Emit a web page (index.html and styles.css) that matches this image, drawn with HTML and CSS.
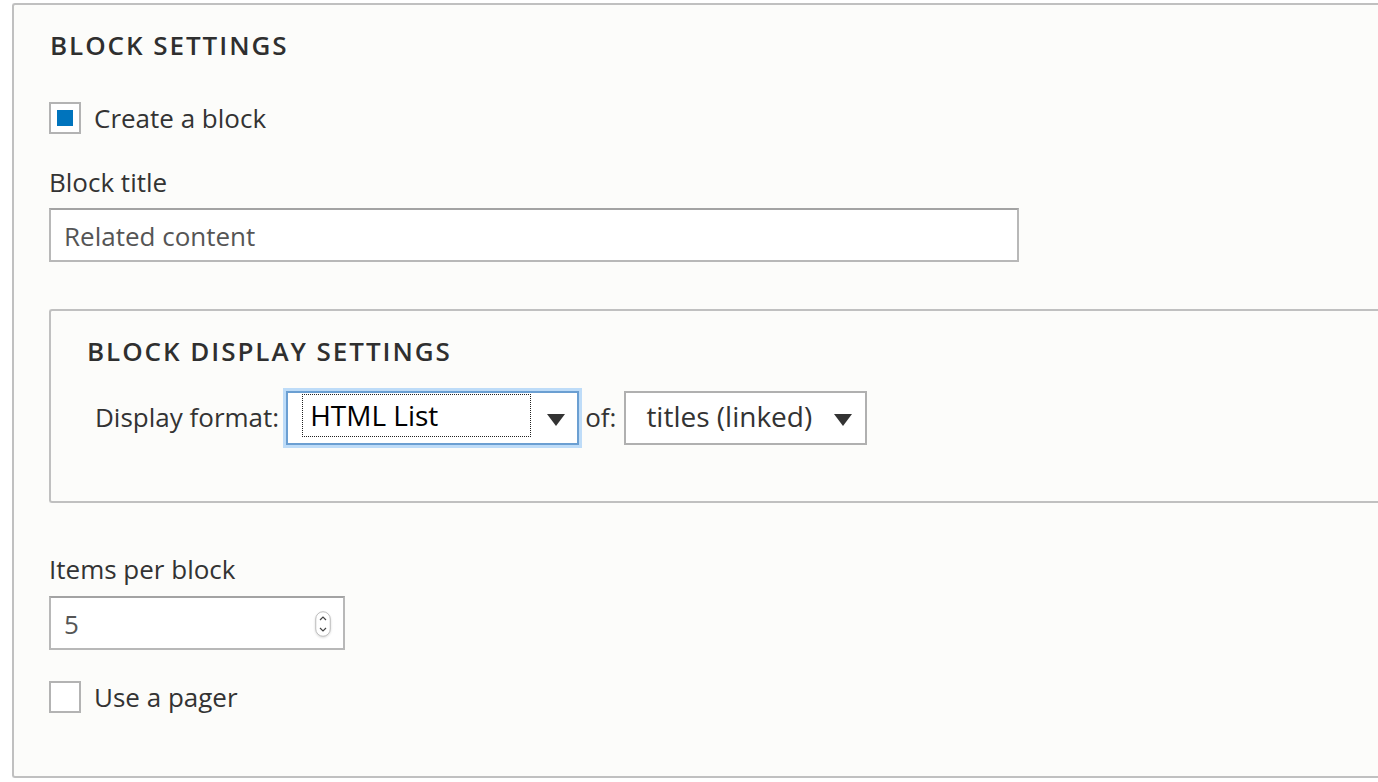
FILE: index.html
```html
<!DOCTYPE html>
<html lang="en">
<head>
<meta charset="utf-8">
<title>Block settings</title>
<link rel="stylesheet" href="styles.css">
</head>
<body>
<div class="fieldset outer">
  <div class="legend">Block settings</div>

  <div class="check-row first-check">
    <span class="checkbox checked"><span class="tick"></span></span>
    <span class="check-label">Create a block</span>
  </div>

  <div class="label title-label">Block title</div>
  <div class="text-input title-input">Related content</div>

  <div class="fieldset inner">
    <div class="legend">Block display settings</div>
    <div class="display-row">
      <span class="row-label">Display format:</span>
      <div class="select focused">
        <span class="focus-rect">HTML List</span>
        <svg class="arrow" width="18" height="12" viewBox="0 0 18 12"><polygon points="0,0 18,0 9,12" fill="#333"/></svg>
      </div>
      <span class="of-label">of:</span>
      <div class="select plain">
        <span class="select-text">titles (linked)</span>
        <svg class="arrow" width="18" height="12" viewBox="0 0 18 12"><polygon points="0,0 18,0 9,12" fill="#333"/></svg>
      </div>
    </div>
  </div>

  <div class="label items-label">Items per block</div>
  <div class="text-input number-input">
    <span>5</span>
    <svg class="spinner" width="16" height="26" viewBox="0 0 16 26">
      <rect x="0.75" y="0.75" width="14.5" height="24.5" rx="7.25" fill="#fff" stroke="#bdbdbd" stroke-width="1"/>
      <polyline points="5,9 8,6 11,9" fill="none" stroke="#444" stroke-width="1.2"/>
      <polyline points="5,17 8,20 11,17" fill="none" stroke="#444" stroke-width="1.2"/>
    </svg>
  </div>

  <div class="check-row pager-check">
    <span class="checkbox"></span>
    <span class="check-label">Use a pager</span>
  </div>
</div>
</body>
</html>
```

FILE: styles.css
```css
html, body {
  margin: 0;
  padding: 0;
  background: #ffffff;
  overflow: hidden;
}

body {
  font-family: "Open Sans", "Noto Sans", sans-serif;
  font-size: 26px;
  line-height: 32px;
  color: #333;
}

.fieldset {
  box-sizing: border-box;
  background: #fcfcfa;
  border: 2px solid #c0c0c0;
  border-right: none;
  border-radius: 3px 0 0 3px;
}

.outer {
  margin: 3px 0 0 12px;
  width: 1500px;
  padding: 0 0 63px 34px;
}

.inner {
  margin: 47px 0 0 1px;
  width: 1500px;
  padding: 0 0 56px 34px;
}

.legend {
  margin: 24px 0 0 2px;
  font-weight: 600;
  text-transform: uppercase;
  letter-spacing: 0.075em;
  height: 32px;
  color: #2f2f2f;
}

.check-row {
  display: flex;
  align-items: center;
  margin-left: 1px;
  height: 32px;
}

.first-check { margin-top: 41px; }
.pager-check { margin-top: 31px; }

.checkbox {
  box-sizing: border-box;
  width: 32px;
  height: 32px;
  border: 2px solid #b3b3b3;
  background: #fff;
  display: flex;
  align-items: center;
  justify-content: center;
  flex: none;
}

.tick {
  width: 16px;
  height: 16px;
  background: #0074bd;
}

.check-label {
  margin-left: 13px;
}

.label {
  height: 32px;
  margin-left: 1px;
}
.title-label { margin-top: 32px; }
.items-label { margin-top: 50px; }

.text-input {
  box-sizing: border-box;
  height: 54px;
  margin-left: 1px;
  border: 2px solid #b8b8b8;
  border-top-color: #a3a3a3;
  background: #fff;
  color: #555;
  padding: 10px 12px 8px 13px;
}

.title-input {
  margin-top: 10px;
  width: 970px;
}

.number-input {
  margin-top: 11px;
  width: 296px;
  display: flex;
  align-items: flex-start;
  justify-content: space-between;
  padding-right: 12px;
}

.spinner {
  margin-top: 3px;
  filter: drop-shadow(0 1px 1px rgba(0,0,0,0.15));
}

.display-row {
  display: flex;
  align-items: center;
  margin-top: 24px;
  margin-left: 10px;
  height: 54px;
}

.row-label {
  margin-right: 7px;
  margin-top: -2px;
}

.of-label {
  margin: -2px 8px 0 6px;
}

.select {
  box-sizing: border-box;
  height: 54px;
  display: flex;
  align-items: flex-start;
  background: #fff;
  font-size: 28px;
}

.select .arrow {
  margin-left: auto;
  align-self: center;
  margin-top: 4px;
  flex: none;
}

.focused {
  width: 293px;
  border: 2px solid #6b9fd2;
  box-shadow: 0 0 0 3px #bedcf8;
  padding-left: 14px;
  padding-right: 12px;
  color: #000;
}

.focus-rect {
  box-sizing: border-box;
  margin-top: 1px;
  width: 229px;
  height: 43px;
  border: 1px dotted #222;
  padding: 4px 0 0 7px;
}

.plain {
  width: 243px;
  border: 2px solid #b0b0b0;
  padding-left: 20px;
  padding-right: 13px;
}

.select-text {
  padding-top: 7px;
}
```
